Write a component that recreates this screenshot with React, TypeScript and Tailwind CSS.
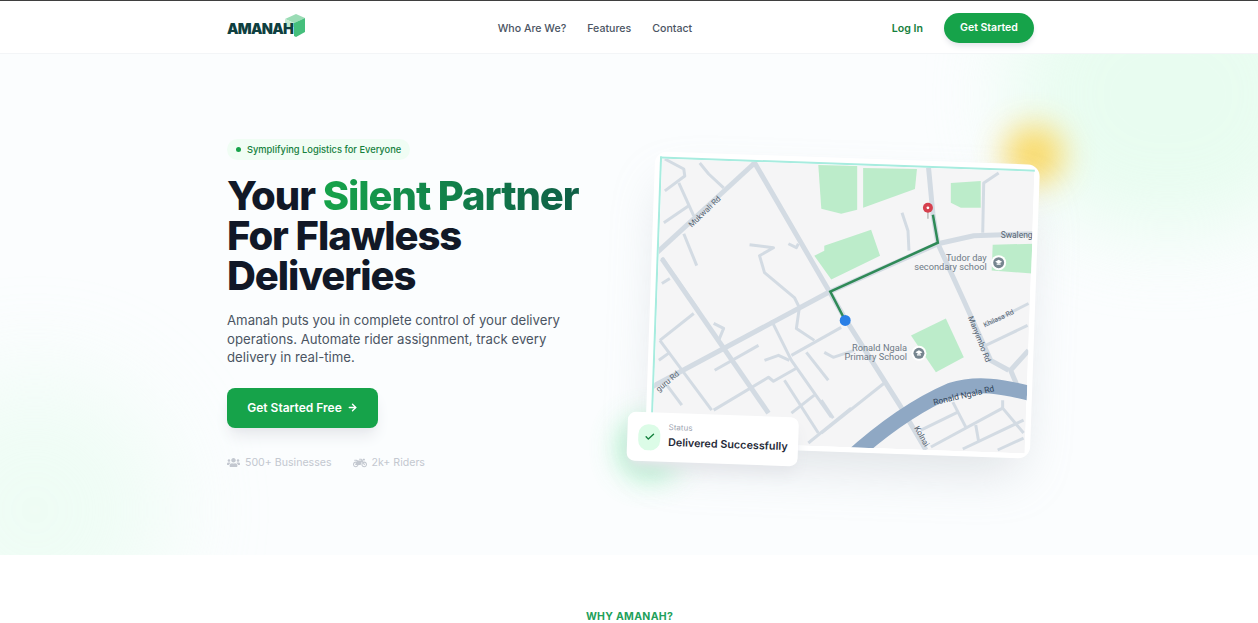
import { ArrowRight, Check } from "lucide-react";
import { FaMotorcycle, FaUsers } from "react-icons/fa";

const minorRoads = [
  "M663 158L682 168L683 175L663 190",
  "M698 162L707 173L722 187",
  "M677 182L692 215",
  "M662 222L687 205",
  "M682 233L695 265",
  "M660 257L697 310",
  "M660 283L668 278",
  "M658 340L692 313",
  "M658 340L710 410",
  "M713 370L757 345",
  "M770 320L790 360L830 417",
  "M783 380L817 433",
  "M790 355L840 327",
  "M805 352L827 380",
  "M712 410L767 377L772 381L795 368",
  "M763 360L777 355L788 360",
  "M790 413L813 395",
  "M807 443L850 408",
  "M712 323L722 328L717 340",
  "M748 244L772 247L758 255L763 272L793 297L798 307L795 328L813 340",
  "M823 352L832 357L853 350",
  "M787 243L795 247L797 243",
  "M901 212L907 230L908 250",
  "M982 232L983 182L998 172",
  "M985 325L1028 303",
  "M985 345L1027 325",
  "M952 402L965 427",
  "M920 430L957 412",
  "M930 447L1002 408",
  "M1002 400L1002 408L1023 433",
  "M975 425L978 442",
  "M962 449L1023 420",
  "M997 450L1023 438",
  "M820 433L883 383",
  "M820 400L832 418",
  "M657 360L668 352",
  "M665 385L680 405",
];

const mainRoads = [
  "M752 160L845 320L900 407L925 450",
  "M752 163L655 252",
  "M640 392L827 292L937 243L973 235L1032 233",
  "M660 258L767 413",
  "M927 160L932 213L937 243L963 300L990 360L1008 370",
  "M1028 350L1010 370L1016 384",
];

const parks = [
  "817,164 856,165 856,209 840,213 820,208",
  "862,167 916,168 914,188 862,207",
  "813,255 823,250 823,245 870,229 879,255 830,279",
  "950,182 980,180 980,207 960,207 950,202",
  "992,244 1034,243 1034,273 991,270",
  "910,335 945,318 963,357 935,372",
];

function SchoolPin({ x, y }: { x: number; y: number }) {
  return (
    <g>
      <circle cx={x} cy={y} r="7.5" fill="#fff" />
      <circle cx={x} cy={y} r="5.5" fill="#76858f" />
      <path d={`M${x - 3.5} ${y - 1}L${x} ${y - 3}L${x + 3.5} ${y - 1}L${x} ${y + 1}Z`} fill="#fff" />
      <path d={`M${x - 2} ${y + 0.8}V${y + 2.2}H${x + 2}V${y + 0.8}`} fill="#fff" />
    </g>
  );
}

function DeliveryMap() {
  return (
    <svg viewBox="0 0 374 283" preserveAspectRatio="xMidYMid slice" className="block h-full w-full">
      <rect width="374" height="283" fill="#f5f5f6" />
      <g transform="translate(-655 -164) rotate(-2 841 305.5)">
        {parks.map((points) => (
          <polygon key={points} points={points} fill="#bcecca" />
        ))}
        {minorRoads.map((d) => (
          <path key={d} d={d} fill="none" stroke="#d3dbe3" strokeWidth="3" strokeLinejoin="round" />
        ))}
        {mainRoads.map((d) => (
          <path key={d} d={d} fill="none" stroke="#d3dbe3" strokeWidth="5" strokeLinejoin="round" />
        ))}
        <path
          d="M847 460C880 430 915 405 950 390C975 382 1000 385 1040 396"
          fill="none"
          stroke="#8fa8c4"
          strokeWidth="15"
        />

        <path d="M932 214L937 242L829 291L844 320" fill="none" stroke="#2f8a57" strokeWidth="2.5" />
        <circle cx="844" cy="320" r="5.5" fill="#2a7fe6" />
        <path d="M927 208V218" stroke="#b9b9b9" strokeWidth="1.5" />
        <circle cx="927" cy="207" r="5" fill="#d6404e" />
        <circle cx="927" cy="207" r="1.4" fill="#fff" />

        <g fill="#6f7a86" fontFamily="Roboto, 'Liberation Sans', sans-serif" fontSize="9.3">
          <text x="986" y="260" textAnchor="end">Tudor day</text>
          <text x="986" y="269" textAnchor="end">secondary school</text>
          <text x="906" y="351" textAnchor="end">Ronald Ngala</text>
          <text x="906" y="360" textAnchor="end">Primary School</text>
        </g>
        <SchoolPin x={998} y={262} />
        <SchoolPin x={918} y={353} />

        <g fill="#566472" fontFamily="Roboto, 'Liberation Sans', sans-serif" fontSize="8">
          <text x="1000" y="237" fontSize="8.5">Swaleng</text>
          <text transform="translate(690 227) rotate(-44)">Mukwali Rd</text>
          <text transform="translate(657 392) rotate(-40)">guru Rd</text>
          <text transform="translate(967 317) rotate(68)">Manyimbo Rd</text>
          <text transform="translate(984 327) rotate(-25)" fontSize="7">Khilasa Rd</text>
          <text transform="translate(913 428) rotate(60)">Kolnai</text>
          <text transform="translate(933 405) rotate(-13)" fill="#33475c" fontSize="8.5">Ronald Ngala Rd</text>
        </g>
      </g>
    </svg>
  );
}

function Header() {
  return (
    <header className="h-[54px] border-t border-b border-t-[#3f3f3f] border-b-[#f3f5f7] bg-white pt-[2px]">
      <div className="ml-[227px] flex h-full w-[807px] items-center justify-between">
        <div className="flex w-[71px] items-center">
          <div className="relative shrink-0">
            <svg viewBox="0 0 22 24" className="absolute top-[-2px] left-[57px] h-[24px] w-[22px]">
              <path d="M1 5L12 0L21 4L10 9Z" fill="#9adcb5" />
              <path d="M10 9L21 4V18L12 23L10 22Z" fill="#45bf7c" />
              <path d="M1 5L10 9V13H1Z" fill="#c2ead1" />
            </svg>
            <span className="relative text-[14.5px] leading-none font-black tracking-[-0.7px] text-[#0f3f40]">AMANAH</span>
          </div>
        </div>
        <nav className="flex items-center gap-[21px] pt-px text-[10.6px] font-medium text-[#4b5563]">
          <a>Who Are We?</a>
          <a>Features</a>
          <a>Contact</a>
        </nav>
        <div className="flex items-center gap-[21px]">
          <a className="pt-px text-[10.6px] font-semibold text-[#15803d]">Log In</a>
          <button className="h-[30px] w-[90px] rounded-full bg-[#16a34a] text-[10.5px] font-semibold text-white shadow-md shadow-gray-200">
            Get Started
          </button>
        </div>
      </div>
    </header>
  );
}

function HeroCopy() {
  return (
    <div className="pb-1">
      <div className="inline-flex h-[21px] items-center gap-[6px] rounded-full bg-[#f0fdf4] px-[9px] text-[9.3px] font-medium text-[#15803d]">
        <span className="h-[5px] w-[5px] rounded-full bg-[#16a34a]" />
        Symplifying Logistics for Everyone
      </div>
      <h1 className="mt-4 text-[40px] leading-[40px] font-extrabold tracking-[-1.05px] text-[#111827]">
        Your{" "}
        <span className="bg-gradient-to-r from-[#16a34a] to-[#0f5f46] bg-clip-text text-transparent">
          Silent Partner
        </span>
        <br />
        For Flawless
        <br />
        Deliveries
      </h1>
      <p className="mt-[15px] w-[345px] text-[13.2px] leading-[18.5px] text-[#4b5563]">
        Amanah puts you in complete control of your delivery operations. Automate rider assignment, track every
        delivery in real-time.
      </p>
      <button className="mt-[21px] flex h-10 w-[151px] items-center justify-center gap-[5px] rounded-lg bg-[#16a34a] text-xs font-semibold text-white shadow-lg shadow-gray-200">
        Get Started Free
        <ArrowRight size={11} strokeWidth={3} />
      </button>
      <div className="mt-[27px] flex items-center gap-[21px] text-[10.6px] text-[#c3c8d0]">
        <span className="flex items-center gap-[5px]">
          <FaUsers size={13} />
          500+ Businesses
        </span>
        <span className="flex items-center gap-[5px]">
          <FaMotorcycle size={14} />
          2k+ Riders
        </span>
      </div>
    </div>
  );
}

function MapCard() {
  return (
    <div className="relative h-[294px]">
      <div className="absolute -top-[33px] -right-[30px] h-[60px] w-[60px] rounded-full bg-[#fcd34d] opacity-85 blur-[16px]" />
      <div className="absolute -bottom-[24px] -left-[28px] h-[56px] w-[56px] rounded-full bg-[#6ee7a0] opacity-80 blur-[16px]" />
      <div className="relative h-full rotate-2 rounded-xl bg-white p-[5px] shadow-2xl shadow-gray-300/70">
        <div className="h-full overflow-hidden border-t-2 border-l-2 border-[#a7ecdf]">
          <DeliveryMap />
        </div>
        <div className="absolute -bottom-4 -left-[18px] flex h-[49px] w-[171px] items-center gap-[8px] rounded-lg bg-white pl-[11px] shadow-lg shadow-gray-200">
          <span className="flex h-[26px] w-[22px] items-center justify-center rounded-[10px] bg-[#dcfce7] text-[#15803d]">
            <Check size={11} strokeWidth={3} />
          </span>
          <div className="pb-1">
            <p className="mb-[2px] text-[8px] leading-[12px] text-[#9ca3af]">Status</p>
            <p className="text-[10.8px] leading-[15px] font-semibold text-[#1f2937]">Delivered Successfully</p>
          </div>
        </div>
      </div>
    </div>
  );
}

export default function App() {
  return (
    <div className="h-[623px] overflow-hidden bg-white font-[Inter,'Liberation_Sans',sans-serif]">
      <Header />
      <main className="relative h-[501px] overflow-hidden bg-[#fbfdfe]">
        <div className="absolute -top-[100px] -right-[70px] h-[280px] w-[320px] rounded-full bg-[#dcfce7] opacity-60 blur-[40px]" />
        <div className="absolute -bottom-[90px] -left-[100px] h-[270px] w-[270px] rounded-full bg-[#dcfce7] opacity-40 blur-[50px]" />
        <div className="relative ml-[227px] grid h-full w-[807px] grid-cols-2 items-center gap-[38px]">
          <HeroCopy />
          <MapCard />
        </div>
      </main>
      <section className="pt-[54px] pl-px text-center text-[10.5px] font-bold tracking-[0.3px] text-[#22a05a]">WHY AMANAH?</section>
    </div>
  );
}
